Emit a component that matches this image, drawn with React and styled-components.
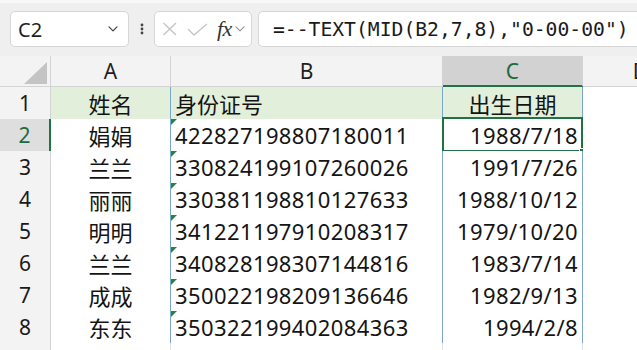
import React from 'react';
import styled, { createGlobalStyle } from 'styled-components';

const GlobalStyle = createGlobalStyle`
  html, body { margin: 0; padding: 0; background: #fff; overflow: hidden; }
  #root { width: 637px; height: 350px; }
`;

const LATIN_CJK = `"Noto Sans", "Noto Sans CJK SC", sans-serif`;
const BLUE = '#7aa5cc';
const GRID = '#e1e1e1';
const HEAD_LINE = '#d3d3d3';
const HEAD_BG = '#f3f3f3';
const GREEN = '#217346';
const COLS = '51px 120px 272px 140px 116px';

const Page = styled.div`
  width: 637px;
  height: 350px;
  overflow: hidden;
  display: flex;
  flex-direction: column;
  background: #fff;
`;

const Toolbar = styled.div`
  flex: none;
  display: flex;
  align-items: center;
  box-sizing: border-box;
  height: 56px;
  padding: 8px 0 9px 10px;
  border-top: 3px solid #f8f8f8;
  background: #efefef;
  overflow: hidden;
`;

const Field = styled.div`
  flex: none;
  box-sizing: border-box;
  height: 36px;
  display: flex;
  align-items: center;
  background: #fff;
  border: 1px solid #d6d6d6;
  border-radius: 5px;
`;

const NameBox = styled(Field)`
  width: 119px;
  padding: 0 10px 0 7px;
  justify-content: space-between;
  font: 400 20px "Noto Sans", sans-serif;
  color: #1f1f1f;
`;

const Grip = styled.div`
  flex: none;
  width: 25px;
  display: flex;
  justify-content: center;
`;

const FxBox = styled(Field)`
  width: 98px;
  padding-left: 6px;
`;

const FxLabel = styled.span`
  font: italic 400 22px "Liberation Serif", serif;
  color: #333;
  margin: 0 3px 0 9px;
  letter-spacing: -0.5px;
`;

const FormulaBox = styled(Field)`
  width: 420px;
  margin-left: 6px;
  padding-left: 14px;
  border-right: none;
  border-radius: 5px 0 0 5px;
  font: 400 19.7px "DejaVu Sans Mono", monospace;
  color: #1a1a1a;
  white-space: pre;
`;

const Sheet = styled.div`
  flex: none;
  display: flex;
  flex-direction: column;
`;

const Row = styled.div`
  flex: none;
  display: grid;
  grid-template-columns: ${COLS};
  height: ${(p) => p.$h}px;
`;

const Corner = styled.div`
  box-sizing: border-box;
  background: ${HEAD_BG};
  border-right: 1px solid ${HEAD_LINE};
  border-bottom: 1px solid ${HEAD_LINE};
  display: flex;
  align-items: flex-end;
  justify-content: flex-end;
  padding: 0 3px 2px 0;
`;

const CornerMark = styled.div`
  width: 0;
  height: 0;
  border-left: 23px solid transparent;
  border-bottom: 22px solid #c4c4c4;
`;

const ColHead = styled.div`
  box-sizing: border-box;
  background: ${(p) => (p.$active ? '#d2d2d2' : HEAD_BG)};
  border-right: 1px solid ${HEAD_LINE};
  border-bottom: ${(p) => (p.$active ? `2px solid ${GREEN}` : `1px solid ${HEAD_LINE}`)};
  display: flex;
  align-items: center;
  justify-content: center;
  font: 400 21px "Noto Sans", sans-serif;
  color: ${(p) => (p.$active ? '#1d6a3d' : '#1f1f1f')};
  white-space: nowrap;
`;

const RowHead = styled.div`
  box-sizing: border-box;
  background: ${(p) => (p.$active ? '#dedede' : HEAD_BG)};
  border-right: ${(p) => (p.$active ? `2px solid ${GREEN}` : `1px solid ${HEAD_LINE}`)};
  border-bottom: 1px solid ${HEAD_LINE};
  display: flex;
  align-items: center;
  justify-content: center;
  font: 400 21px "Noto Sans", sans-serif;
  color: ${(p) => (p.$active ? '#1d6a3d' : '#1a1a1a')};
`;

const Cell = styled.div`
  position: relative;
  box-sizing: border-box;
  background: ${(p) => p.$fill || '#fff'};
  border-right: 1px solid ${(p) => (p.$tb ? BLUE : GRID)};
  border-bottom: 1px solid ${(p) => (p.$tb ? BLUE : GRID)};
  display: flex;
  align-items: center;
  justify-content: ${(p) =>
    p.$align === 'right' ? 'flex-end' : p.$align === 'left' ? 'flex-start' : 'center'};
  padding: 0 4px 0 4px;
  font: 400 22px ${LATIN_CJK};
  letter-spacing: ${(p) => (p.$num ? '0.4px' : '0')};
  color: #141414;
  white-space: nowrap;

  ${(p) =>
    p.$textFlag &&
    `
    &::before {
      content: '';
      position: absolute;
      top: 0;
      left: 0;
      width: 0;
      height: 0;
      border-top: 6px solid #1e8a3e;
      border-right: 6px solid transparent;
    }
  `}
`;

const Selection = styled.div`
  position: absolute;
  left: -1px;
  top: -2px;
  right: -1px;
  bottom: -1px;
  border: 2px solid ${GREEN};
  pointer-events: none;
`;

const FillHandle = styled.div`
  position: absolute;
  right: -5px;
  bottom: -5px;
  width: 7px;
  height: 7px;
  box-sizing: border-box;
  background: ${GREEN};
  border: 1px solid #fff;
`;

const Chevron = ({ color = '#444' }) => (
  <svg width="10" height="6" viewBox="0 0 10 6" fill="none">
    <path d="M1 0.8 L5 4.8 L9 0.8" stroke={color} strokeWidth="1.2" strokeLinecap="round" strokeLinejoin="round" />
  </svg>
);

const Dots = () => (
  <svg width="4" height="12" viewBox="0 0 4 12">
    <circle cx="2" cy="2" r="1.4" fill="#444" />
    <circle cx="2" cy="6" r="1.4" fill="#444" />
    <circle cx="2" cy="10" r="1.4" fill="#444" />
  </svg>
);

const CancelIcon = () => (
  <svg width="16" height="14" viewBox="0 0 16 14" fill="none" style={{ marginLeft: 1 }}>
    <path d="M1.5 1 L14 13 M14 1 L1.5 13" stroke="#c4c4c4" strokeWidth="1.3" />
  </svg>
);

const CheckIcon = () => (
  <svg width="21" height="13" viewBox="0 0 21 13" fill="none" style={{ marginLeft: 9 }}>
    <path d="M1 6 L7 12 L20 1" stroke="#c4c4c4" strokeWidth="1.3" />
  </svg>
);

const data = [
  ['娟娟', '422827198807180011', '1988/7/18'],
  ['兰兰', '330824199107260026', '1991/7/26'],
  ['丽丽', '330381198810127633', '1988/10/12'],
  ['明明', '341221197910208317', '1979/10/20'],
  ['兰兰', '340828198307144816', '1983/7/14'],
  ['成成', '350022198209136646', '1982/9/13'],
  ['东东', '350322199402084363', '1994/2/8'],
];

const HEADER_FILL = '#e2efda';

export default function App() {
  return (
    <Page>
      <GlobalStyle />
      <Toolbar>
        <NameBox>
          <span>C2</span>
          <Chevron />
        </NameBox>
        <Grip>
          <Dots />
        </Grip>
        <FxBox>
          <CancelIcon />
          <CheckIcon />
          <FxLabel>fx</FxLabel>
          <Chevron color="#9a9a9a" />
        </FxBox>
        <FormulaBox>=--TEXT(MID(B2,7,8),"0-00-00")</FormulaBox>
      </Toolbar>
      <Sheet>
        <Row $h={31}>
          <Corner>
            <CornerMark />
          </Corner>
          <ColHead>A</ColHead>
          <ColHead>B</ColHead>
          <ColHead $active>C</ColHead>
          <ColHead>D</ColHead>
        </Row>
        <Row $h={32}>
          <RowHead>1</RowHead>
          <Cell $tb $fill={HEADER_FILL}>姓名</Cell>
          <Cell $tb $fill={HEADER_FILL} $align="left">身份证号</Cell>
          <Cell $tb $fill={HEADER_FILL}>出生日期</Cell>
          <Cell />
        </Row>
        {data.map(([name, id, date], i) => {
          const active = i === 0;
          return (
            <Row $h={32} key={i}>
              <RowHead $active={active}>{i + 2}</RowHead>
              <Cell $tb>{name}</Cell>
              <Cell $tb $align="left" $num $textFlag>{id}</Cell>
              <Cell $tb $align="right" $num>
                {date}
                {active && (
                  <Selection>
                    <FillHandle />
                  </Selection>
                )}
              </Cell>
              <Cell />
            </Row>
          );
        })}
        <Row $h={32}>
          <RowHead />
          <Cell />
          <Cell />
          <Cell />
          <Cell />
        </Row>
      </Sheet>
    </Page>
  );
}
